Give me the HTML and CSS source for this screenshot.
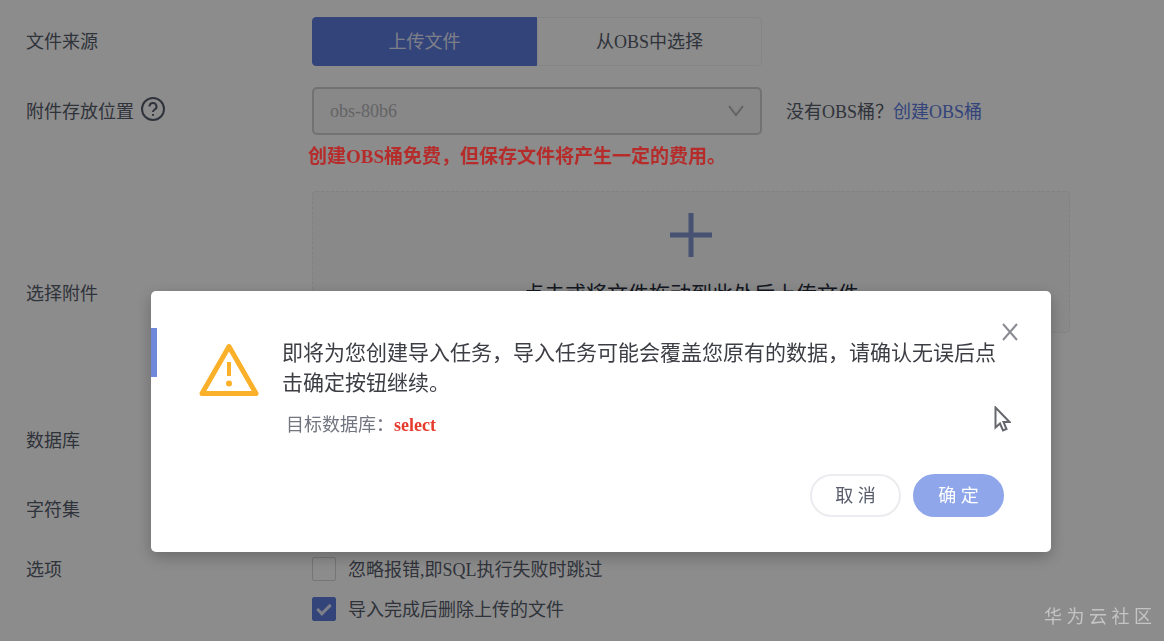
FILE: index.html
```html
<!DOCTYPE html>
<html lang="zh-CN">
<head>
    <meta charset="UTF-8">
    <meta name="viewport" content="width=device-width, initial-scale=1.0">
    <title>导入任务</title>
    <link rel="stylesheet" href="styles.css">
</head>
<body>
    <form class="import-form">
        <div class="row">
            <span class="label">文件来源</span>
            <div class="tabs">
                <button type="button" class="tab active">上传文件</button>
                <button type="button" class="tab">从OBS中选择</button>
            </div>
        </div>
        <div class="row">
            <label class="label" for="bucket">附件存放位置
                <svg class="help" viewBox="0 0 26 26">
                    <circle cx="13" cy="13" r="11"/>
                    <path d="M9.500 10.500a3.500 3.500 0 1 1 5.200 3c-1.200.7-1.700 1.200-1.700 2.500"/>
                    <path d="M13 18v1.800"/>
                </svg>
            </label>
            <div class="field">
                <div class="bucket-line">
                    <div class="select-box">
                        <select id="bucket" disabled>
                            <option>obs-80b6</option>
                        </select>
                        <svg class="arrow" viewBox="0 0 16 12"><path d="M1 1l7 9 7-9"/></svg>
                    </div>
                    <p class="hint">没有OBS桶？<a href="#">创建OBS桶</a></p>
                </div>
                <p class="note">创建OBS桶免费，但保存文件将产生一定的费用。</p>
            </div>
        </div>
        <div class="row attach-row">
            <span class="label">选择附件</span>
            <button type="button" class="upload">
                <svg class="plus" viewBox="0 0 42 44"><path d="M0 22h42M21 0v44"/></svg>
                <span>点击或将文件拖动到此处后上传文件</span>
            </button>
        </div>
        <div class="row">
            <label class="label" for="database">数据库</label>
            <div class="select-box"><select id="database"></select></div>
        </div>
        <div class="row">
            <label class="label" for="charset">字符集</label>
            <div class="select-box"><select id="charset"></select></div>
        </div>
        <div class="row">
            <span class="label label-small">选项</span>
            <div class="options">
                <div class="option">
                    <input type="checkbox" id="skip">
                    <label for="skip">忽略报错,即SQL执行失败时跳过</label>
                </div>
                <div class="option">
                    <input type="checkbox" id="clean" checked>
                    <label for="clean">导入完成后删除上传的文件</label>
                </div>
            </div>
        </div>
    </form>

    <div class="overlay">
        <div class="modal" role="dialog" aria-modal="true">
            <span class="side-tab"></span>
            <button type="button" class="close" aria-label="关闭">
                <svg viewBox="0 0 16 18"><path d="M1 1l14 16M15 1L1 17"/></svg>
            </button>
            <div class="modal-body">
                <svg class="warning" viewBox="0 0 62 56">
                    <path class="triangle" d="M31 4.500L58 51.500H4z"/>
                    <path class="mark" d="M31 20v14"/>
                    <circle cx="31" cy="41.500" r="3"/>
                </svg>
                <div>
                    <p class="message">即将为您创建导入任务，导入任务可能会覆盖您原有的数据，请确认无误后点击确定按钮继续。</p>
                    <p class="target">目标数据库：<strong>select</strong></p>
                </div>
            </div>
            <div class="modal-footer">
                <button type="button" class="btn">取 消</button>
                <button type="button" class="btn primary">确 定</button>
            </div>
            <svg class="cursor" viewBox="0 0 17 26"><path d="M1.500 1.500v20l4.500-4 3 7 3.500-1.500-3-7h6z"/></svg>
        </div>
    </div>

    <div class="watermark">华 为 云 社 区</div>
</body>
</html>
```
FILE: styles.css
```css
* {
    box-sizing: border-box;
}
body, button, select {
    font-family: "Liberation Serif", "Noto Sans CJK SC", sans-serif;
    font-size: 18px;
}
body {
    margin: 0;
    min-height: 100vh;
    overflow: hidden;
    background-color: #fff;
    color: #575d6c;
}
p {
    margin: 0;
}
button {
    padding: 0;
    color: inherit;
    cursor: pointer;
}
svg {
    fill: none;
    stroke: currentColor;
}

/* Form */
.import-form {
    display: flex;
    flex-direction: column;
    gap: 21px;
    padding: 17px 26px;
}
.row {
    display: flex;
    align-items: flex-start;
}
.label {
    display: flex;
    align-items: center;
    gap: 6px;
    flex: 0 0 286px;
    height: 48px;
    padding-bottom: 2px;
}
.label-small {
    height: 30px;
}
.help {
    width: 26px;
    height: 26px;
    margin-bottom: 2px;
    stroke-width: 2;
}
.tabs {
    display: flex;
    width: 450px;
    height: 49px;
}
.tab {
    flex: 1;
    padding-bottom: 4px;
    border: 1px solid #f0f1fa;
    border-radius: 0 4px 4px 0;
    background-color: #fff;
}
.tab.active {
    border-color: #5e7ce0;
    border-radius: 4px 0 0 4px;
    background-color: #5e7ce0;
    color: #e4e8f8;
}
.bucket-line {
    display: flex;
    align-items: center;
    gap: 24px;
}
.select-box {
    position: relative;
    width: 450px;
}
.select-box select {
    display: block;
    width: 100%;
    height: 48px;
    padding: 0 16px;
    border: 2px solid #cfcfd3;
    border-radius: 5px;
    background-color: #f7f7f7;
    color: #b6b6ba;
    opacity: 1;
    appearance: none;
}
.arrow {
    position: absolute;
    top: 18px;
    right: 18px;
    width: 16px;
    height: 12px;
    color: #b4b5ba;
    stroke-width: 2;
}
.hint {
    padding-bottom: 2px;
}
.hint a {
    color: #5e7ce0;
    text-decoration: none;
}
/* The fee note stays readable above the mask */
.note {
    position: relative;
    z-index: 2;
    margin: 9px 0 0 -4px;
    color: #b52c2b;
    font-size: 19px;
    font-weight: bold;
    line-height: 26px;
}
.attach-row {
    height: 204px;
    align-items: center;
}
.upload {
    display: flex;
    flex-direction: column;
    align-items: center;
    align-self: flex-start;
    gap: 22px;
    width: 758px;
    height: 142px;
    padding-top: 21px;
    border: 1px dashed #ebebee;
    border-radius: 4px;
    background-color: #f9f9f9;
    color: #252b3a;
    font-size: 21px;
    line-height: 30px;
}
.plus {
    width: 42px;
    height: 44px;
    color: #8295d2;
    stroke-width: 5;
}
.options {
    display: flex;
    flex-direction: column;
    gap: 10px;
}
.option {
    display: flex;
    align-items: center;
    gap: 12px;
    height: 30px;
}
.option label {
    padding-bottom: 2px;
}
.option input {
    position: relative;
    width: 24px;
    height: 24px;
    margin: 0;
    border: 1px solid #d4d5da;
    border-radius: 2px;
    background-color: #fff;
    appearance: none;
}
.option input:checked {
    border-color: #5e7ce0;
    background-color: #5e7ce0;
}
.option input:checked::after {
    content: "";
    box-sizing: border-box;
    position: absolute;
    top: 6px;
    left: 4px;
    width: 14px;
    height: 8px;
    border: solid #e4e8f8;
    border-width: 0 0 3px 3px;
    transform: rotate(-45deg);
}

/* Confirm dialog */
.overlay {
    position: fixed;
    inset: 0;
    z-index: 1;
    padding: 291px 113px 0 151px;
    background-color: rgba(0, 0, 0, 0.45);
}
.modal {
    position: relative;
    padding: 47px 47px 35px;
    border-radius: 5px;
    background-color: #fff;
    box-shadow: 0 5px 16px rgba(0, 0, 0, 0.25);
}
.side-tab {
    position: absolute;
    top: 37px;
    left: 0;
    width: 6px;
    height: 49px;
    background-color: #7088da;
}
.close {
    position: absolute;
    top: 32px;
    right: 33px;
    width: 16px;
    height: 18px;
    border: 0;
    background: none;
    color: #8a8c92;
}
.close svg {
    display: block;
    stroke-width: 2;
}
.modal-body {
    display: flex;
    gap: 22px;
}
.warning {
    flex: none;
    width: 62px;
    height: 56px;
    margin-top: 4px;
    color: #fbb02a;
}
.warning .triangle {
    stroke-width: 5;
    stroke-linejoin: round;
}
.warning .mark {
    stroke-width: 4;
}
.warning circle {
    fill: currentColor;
    stroke: none;
}
.message {
    color: #3c3e44;
    font-size: 21px;
    line-height: 30px;
}
.target {
    margin: 15px 0 0 4px;
    color: #71757f;
    line-height: 24px;
}
.target strong {
    color: #e63c2e;
}
.modal-footer {
    display: flex;
    justify-content: flex-end;
    gap: 12px;
    margin-top: 37px;
}
.btn {
    width: 91px;
    height: 43px;
    padding-bottom: 4px;
    border: 2px solid #ececf0;
    border-radius: 22px;
    background-color: #fff;
}
.btn.primary {
    border-color: #8fa7ea;
    background-color: #8fa7ea;
    color: #fff;
}
.cursor {
    position: absolute;
    top: 115px;
    right: 40px;
    width: 17px;
    height: 26px;
    fill: #fff;
    color: #66686d;
    stroke-width: 2;
}
.watermark {
    position: fixed;
    right: 12px;
    bottom: 13px;
    z-index: 2;
    color: #c4c4c4;
}
```
